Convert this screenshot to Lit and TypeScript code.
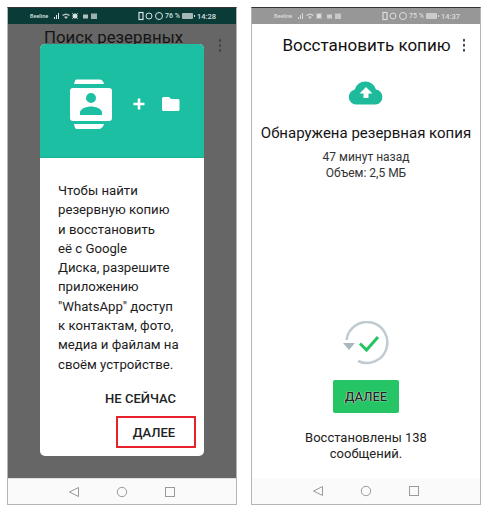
import { LitElement, html, css } from "lit";
import { customElement } from "lit/decorators.js";

const statusIcons = (pct: string, time: string, c: string) => html`
  <div class="status" style="color:${c}">
    <span class="carrier">Beeline</span>
    <svg width="48" height="10" viewBox="0 0 48 10" fill="${c}" class="sicons">
      <path d="M1 8h1V6H1zM3 8h1V4H3zM5 8h1V2H5z"/>
      <path d="M9 4q4-3 8 0l-1 1q-3-2-6 0zM11 6q2-1.500 4 0l-2 2z" opacity=".8"/>
      <circle cx="22" cy="5" r="2.500"/><path d="M19 2l6 6M25 2l-6 6" stroke="${c}" stroke-width=".7"/>
      <rect x="30" y="3.500" width="5" height="4" opacity=".8"/>
      <rect x="38" y="2.500" width="6" height="5.500" opacity=".7"/>
    </svg>
    <span class="spacer"></span>
    <svg width="26" height="10" viewBox="0 0 26 10" fill="none" stroke="${c}" class="sicons2">
      <rect x="1" y="1.500" width="4" height="7" stroke-width="1.200"/>
      <circle cx="11" cy="5" r="3" stroke-width="1"/>
      <circle cx="21" cy="5" r="3.500" stroke-width="1"/>
    </svg>
    <span class="pct">${pct}</span>
    <svg width="14" height="8" viewBox="0 0 14 8" class="batt"><rect x="0" y="1" width="11" height="6" rx="1" fill="${c}" opacity=".75"/><rect x="12" y="3" width="1" height="2" fill="${c}"/></svg>
    <span class="time">${time}</span>
  </div>`;

const nav = () => html`
  <div class="nav">
    <svg width="12" height="12" viewBox="0 0 12 12" fill="none" stroke="#9a9a9a"><path d="M10.500 1.500v9L1.500 6z"/></svg>
    <svg width="12" height="12" viewBox="0 0 12 12" fill="none" stroke="#9a9a9a"><circle cx="6" cy="6" r="4.700"/></svg>
    <svg width="12" height="12" viewBox="0 0 12 12" fill="none" stroke="#9a9a9a"><rect x="1.500" y="1.500" width="9" height="9"/></svg>
  </div>`;

const dots = () => html`<div class="dots"><i></i><i></i><i></i></div>`;

@customElement("app-root")
export class AppRoot extends LitElement {
  static styles = css`
    :host {
      display: flex;
      gap: 14px;
      padding: 7px;
      width: 488px;
      height: 512px;
      box-sizing: border-box;
      background: #fff;
      font-family: Roboto, "Noto Sans", sans-serif;
      color: #111;
    }
    .phone {
      position: relative;
      width: 230px;
      height: 498px;
      box-sizing: border-box;
      border: 1px solid #b4b4b4;
      border-top-color: #333;
      display: flex;
      flex-direction: column;
      background: #fff;
    }
    .status {
      height: 16px;
      flex: none;
      display: flex;
      align-items: center;
      padding-left: 22px;
      padding-right: 20px;
      font-size: 7px;
      font-weight: 500;
    }
    .carrier { width: 20px; font-size: 5.500px; margin-right: 3px; white-space: nowrap; }
    .sicons { flex: none; }
    .spacer { flex: 1; }
    .sicons2 { flex: none; margin-right: 1px; }
    .pct { white-space: nowrap; font-size: 7px; margin-right: 2px; }
    .batt { flex: none; margin-right: 1px; }
    .time { white-space: nowrap; font-size: 7.500px; }
    .left .status { background: #0b3b37; }
    .right .status { background: #979797; }
    .body { flex: 1; display: flex; flex-direction: column; min-height: 0; position: relative; }
    .left .body { background: #666; }
    .bar { display: flex; align-items: center; height: 36px; flex: none; position: relative; }
    .left .bar { padding-left: 36px; height: 26px; align-items: flex-start; }
    .title { font-size: 17px; line-height: 26px; color: #111; white-space: nowrap; }
    .left .title { color: #141414; font-size: 16.800px; }
    .right .bar { justify-content: center; margin-top: 3px; }
    .right .title { padding-left: 1px; }
    .dots { position: absolute; right: 15px; top: 50%; transform: translateY(-50%); display: flex; flex-direction: column; gap: 2.500px; }
    .left .dots { top: 15px; transform: none; right: 15px; }
    .dots i { width: 2.500px; height: 2.500px; border-radius: 50%; background: #444; display: block; }
    .dialog {
      position: absolute;
      left: 32px;
      top: 20px;
      width: 164px;
      height: 412px;
      border-radius: 5px;
      background: #fff;
      overflow: hidden;
      display: flex;
      flex-direction: column;
    }
    .hero {
      height: 114px;
      flex: none;
      box-sizing: border-box;
      background: #1dbfa3;
      display: flex;
      align-items: center;
      border-bottom: 1px solid #1aae95;
    }
    .hero svg { display: block; margin-left: 30px; margin-top: 9px; }
    .msg {
      margin: 23px 0 0 18px;
      font-size: 13.200px;
      line-height: 19.300px;
      color: #1c1c1c;
      white-space: nowrap;
    }
    .actions { margin-top: auto; display: flex; flex-direction: column; align-items: flex-end; padding: 0 8px 8px 0; }
    .later { font-size: 13px; font-weight: 500; color: #222; margin: 0 20px 9px 0; line-height: 16px; white-space: nowrap; }
    .next {
      width: 80px; height: 32px; box-sizing: border-box;
      border: 2px solid #e8222b;
      padding-right: 4px;
      display: flex; align-items: center; justify-content: center;
      font-size: 13px; font-weight: 500; color: #222;
    }
    .nav {
      height: 26px;
      flex: none;
      background: #fafafa;
      display: grid;
      grid-template-columns: repeat(3, 48px);
      justify-content: center;
      align-items: center;
      justify-items: center;
      border-top: 1px solid #e0e0e0;
      box-sizing: border-box;
    }
    .right .nav { border-top: none; }
    .content { flex: 1; display: flex; flex-direction: column; align-items: center; min-height: 0; }
    .cloud { margin-top: 18px; display: block; }
    .found { margin-top: 18px; font-size: 15px; line-height: 20px; color: #151515; white-space: nowrap; }
    .meta { margin-top: 6px; font-size: 12px; line-height: 16px; color: #333; text-align: center; }
    .sync { margin-top: 140px; display: block; }
    .go {
      margin-top: 15px;
      width: 66px; height: 33px;
      border-radius: 2px;
      background: #25c464;
      display: flex; align-items: center; justify-content: center;
      font-size: 13px; font-weight: 500;
      color: #1a2a20;
      text-shadow: 0 0 1px #fff, 0 0 1px #fff;
    }
    .done { margin-top: 17px; font-size: 13px; line-height: 16px; text-align: center; color: #222; }
  `;

  render() {
    return html`
      <div class="phone left">
        ${statusIcons("76 %", "14:28", "#d8e2e0")}
        <div class="body">
          <div class="bar">
            <div class="title">Поиск резервных</div>
            ${dots()}
          </div>
          <div class="dialog">
            <div class="hero">
              <svg width="110" height="52" viewBox="0 0 110 52" fill="#fff">
                <path d="M5 2q0-1.500 1.500-1.500h23Q33 .5 34 5H4zM4 45h30q-1 4-4.500 5h-23Q5 50 4 45z"/>
                <path fill-rule="evenodd" d="M3 9h36a3 3 0 0 1 3 3v27a3 3 0 0 1-3 3H3a3 3 0 0 1-3-3V12a3 3 0 0 1 3-3zm18 5a5 5 0 1 0 0 10a5 5 0 0 0 0-10zM10 36h22v-2.500c0-4-7-6-11-6s-11 2-11 6z"/>
                <path d="M67.700 19.500h2.600v4.200h4.200v2.600h-4.200v4.200h-2.600v-4.200h-4.200v-2.600h4.200z"/>
                <path d="M93.500 18h5.500l2 2h7a1.500 1.500 0 0 1 1.500 1.500v9a1.500 1.500 0 0 1-1.500 1.500H93.500a1.500 1.500 0 0 1-1.500-1.500v-11a1.500 1.500 0 0 1 1.500-1.500z"/>
              </svg>
            </div>
            <div class="msg">
              Чтобы найти<br>резервную копию<br>и восстановить<br>её с Google<br>Диска, разрешите<br>приложению<br>"WhatsApp" доступ<br>к контактам, фото,<br>медиа и файлам на<br>своём устройстве.
            </div>
            <div class="actions">
              <div class="later">НЕ СЕЙЧАС</div>
              <div class="next">ДАЛЕЕ</div>
            </div>
          </div>
        </div>
        ${nav()}
      </div>
      <div class="phone right">
        ${statusIcons("75 %", "14:37", "#dcdcdc")}
        <div class="bar">
          <div class="title">Восстановить копию</div>
          ${dots()}
        </div>
        <div class="content">
          <svg class="cloud" width="36" height="24" viewBox="0 0 36 24">
            <path fill="#1dbb9c" d="M8 23.500a7.500 7.500 0 0 1-1.500-14.800A11 11 0 0 1 17.500.5a11 11 0 0 1 10.500 8 7.600 7.600 0 0 1 0 15z"/>
            <path fill="#fff" d="M18 6l6.500 6.500h-4V17h-5v-4.500h-4z"/>
          </svg>
          <div class="found">Обнаружена резервная копия</div>
          <div class="meta">47 минут назад<br>Объем: 2,5 МБ</div>
          <svg class="sync" width="50" height="44" viewBox="0 0 50 44" fill="none">
            <path d="M5.500 19A20.500 20.500 0 1 1 17 40" stroke="#bfcbd0" stroke-width="2.500"/>
            <path d="M2 22h12l-6 7z" fill="#a9b7be"/>
            <path d="M19 22.500l6.500 6.500L37 16" stroke="#25c464" stroke-width="3"/>
          </svg>
          <div class="go">ДАЛЕЕ</div>
          <div class="done">Восстановлены 138<br>сообщений.</div>
        </div>
        ${nav()}
      </div>
    `;
  }
}
